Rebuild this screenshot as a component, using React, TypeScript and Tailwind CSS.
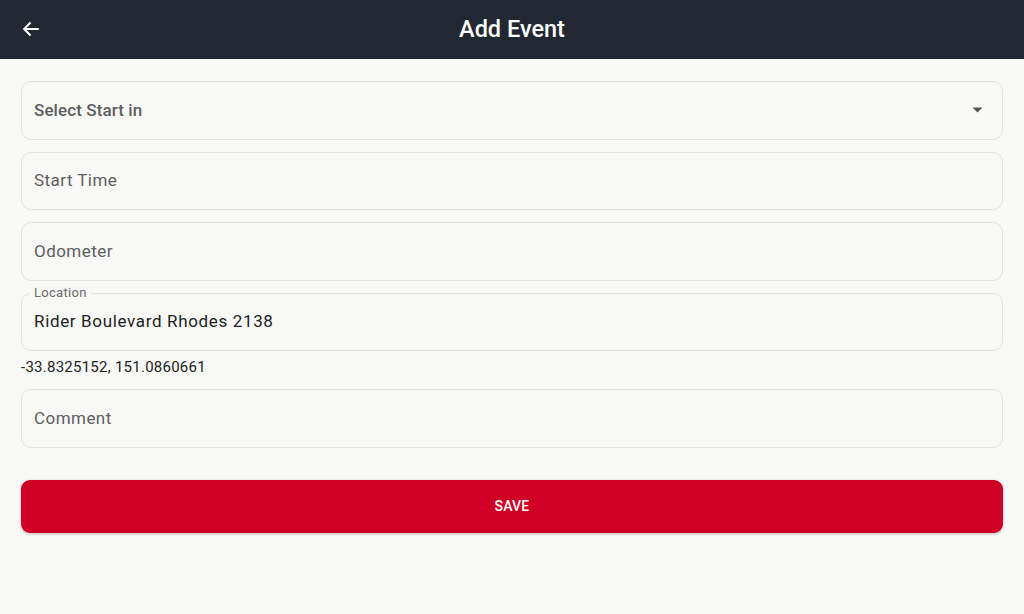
import React from "react";

function Field({ label, children, right }: { label?: string; children: React.ReactNode; right?: React.ReactNode }) {
  return (
    <div className="relative h-[58.5px] rounded-[10px] border border-[#e3e3e3] bg-[#f8f8f7] flex items-center px-[12px]">
      {label && (
        <span className="absolute -top-[9px] left-[8px] px-[4px] bg-[#f8f8f7] text-[13px] leading-[15px] tracking-[0.3px] text-[#6b6b6b]">{label}</span>
      )}
      <div className="flex-1 text-[17px] tracking-[0.45px]">{children}</div>
      {right}
    </div>
  );
}

export default function App() {
  return (
    <div className="w-[1024px] h-[614px] bg-[#f8f8f7] overflow-hidden" style={{ fontFamily: "Roboto, 'Noto Sans', sans-serif" }}>
      <header className="h-[59px] bg-[#222831] flex items-center relative">
        <button className="absolute left-[19px] top-[17px] w-[24px] h-[24px] flex items-center justify-center text-white">
          <svg width="22" height="22" viewBox="0 0 24 24" fill="none" stroke="white" strokeWidth="2.2">
            <path d="M20.5 12H4.5" />
            <path d="M11.5 5L4.5 12l7 7" />
          </svg>
        </button>
        <h1 className="flex-1 text-center text-white text-[23.5px] font-medium">Add Event</h1>
      </header>
      <main className="px-[21px] pt-[22px] flex flex-col">
        <Field
          right={
            <svg width="11" height="6" viewBox="0 0 11 6" className="mr-[7px]">
              <path d="M0.5 0.5h10L5.5 5.5z" fill="#555" />
            </svg>
          }
        >
          <span className="text-[#5e5e5e] font-medium tracking-[0.1px]">Select Start in</span>
        </Field>
        <div className="h-[12px]" />
        <Field>
          <span className="text-[#5e5e5e]">Start Time</span>
        </Field>
        <div className="h-[12px]" />
        <Field>
          <span className="text-[#5e5e5e]">Odometer</span>
        </Field>
        <div className="h-[12px]" />
        <Field label="Location">
          <span className="text-[#222] tracking-[0.65px]">Rider Boulevard Rhodes 2138</span>
        </Field>
        <div className="h-[38px] pt-[6px] text-[15px] leading-[20px] text-[#222] tracking-[0.25px]">-33.8325152, 151.0860661</div>
        <Field>
          <span className="text-[#5e5e5e]">Comment</span>
        </Field>
        <button className="mt-[32px] h-[53px] rounded-[9px] bg-[#cf0024] text-white text-[14px] font-medium tracking-[0.2px] shadow-[0_1px_3px_rgba(0,0,0,0.25)]">
          SAVE
        </button>
      </main>
    </div>
  );
}
